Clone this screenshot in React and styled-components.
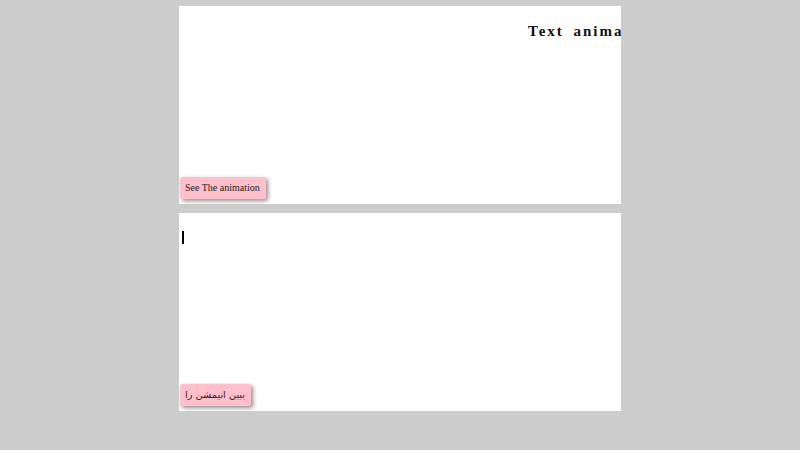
import React from "react";
import styled, { createGlobalStyle } from "styled-components";

const GlobalStyle = createGlobalStyle`
  html, body {
    margin: 0;
    padding: 0;
    background: #cccccc;
  }
`;

const Page = styled.main`
  display: flex;
  flex-direction: column;
  align-items: center;
  gap: 9px;
  padding-top: 6px;
  font-family: "Liberation Serif", "Times New Roman", serif;
`;

const Stage = styled.section`
  width: 442px;
  height: 198px;
  background: #ffffff;
  overflow: hidden;
  display: flex;
  flex-direction: column;
  align-items: flex-start;
  box-sizing: border-box;
  padding: 0 0 5px 1px;
`;

const Marquee = styled.h2`
  margin: 17px 0 0;
  padding-left: ${props => props.offset}px;
  white-space: nowrap;
  font-size: 15px;
  font-weight: bold;
  letter-spacing: 2px;
  word-spacing: 4px;
  color: #111;
`;

const Typing = styled.div`
  margin: 18px 0 0 2px;
  height: 13px;
  width: 2px;
  background: #000;
`;

const Button = styled.button`
  margin-top: auto;
  height: 22px;
  padding: 0 6px 1px 5px;
  border: none;
  border-radius: 2px;
  background: #ffc0cb;
  color: #222;
  font-family: ${props =>
    props.rtl
      ? `"DejaVu Sans", "Noto Sans", sans-serif`
      : `"Liberation Serif", "Times New Roman", serif`};
  font-size: ${props => (props.rtl ? "9.8px" : "10px")};
  direction: ${props => (props.rtl ? "rtl" : "ltr")};
  box-shadow: 2px 2px 4px rgba(0, 0, 0, 0.45);
  cursor: pointer;
`;

export default function App() {
  return (
    <>
      <GlobalStyle />
      <Page>
        <Stage>
          <Marquee offset={348}>Text animation</Marquee>
          <Button>See The animation</Button>
        </Stage>
        <Stage>
          <Typing />
          <Button rtl>ببین انیمشن را</Button>
        </Stage>
      </Page>
    </>
  );
}
